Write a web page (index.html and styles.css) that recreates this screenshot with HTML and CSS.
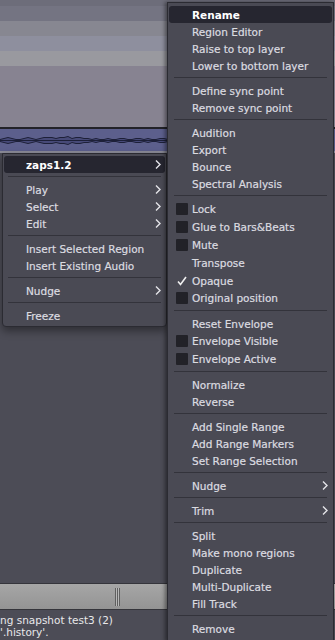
FILE: index.html
```html
<!DOCTYPE html>
<html lang="en">
<head>
  <meta charset="UTF-8">
  <title>Region menu</title>
  <link rel="stylesheet" href="styles.css">
</head>
<body>
  <div class="screen">
    <div class="band band-0"></div>
    <div class="band band-1"></div>
    <div class="band band-2"></div>
    <div class="band band-3"></div>
    <div class="band band-4"></div>
    <div class="band band-5"></div>
    <div class="track-line"></div>
    <div class="wave">
      <svg width="168" height="22" viewBox="0 0 168 22">
        <polygon class="wave-fill" points="0,10.5 4,9.5 8,8.5 12,9.5 16,10.5 20,10.5 24,9.5 28,8.5 32,9.5 36,10.5 40,9.5 44,8.5 48,8.5 52,8.5 56,9.5 60,8.5 64,8.5 68,7.5 72,9.5 76,8.5 80,8.5 84,9.5 88,9.5 92,10.5 96,9.5 100,10.5 104,10.5 108,9.5 112,10.5 116,10.5 120,9.5 124,9.5 128,10.5 132,10.5 136,9.5 140,9.5 144,10.5 148,9.5 152,10.5 156,10.5 160,9.5 164,9.5 168,10.5 168,12.5 164,13.5 160,13.5 156,12.5 152,12.5 148,13.5 144,12.5 140,13.5 136,13.5 132,12.5 128,12.5 124,13.5 120,13.5 116,12.5 112,12.5 108,13.5 104,12.5 100,12.5 96,13.5 92,12.5 88,13.5 84,13.5 80,14.5 76,14.5 72,13.5 68,15.5 64,14.5 60,14.5 56,13.5 52,14.5 48,14.5 44,14.5 40,13.5 36,12.5 32,13.5 28,14.5 24,13.5 20,12.5 16,12.5 12,13.5 8,14.5 4,13.5 0,12.5"/>
        <line class="wave-mid" x1="0" y1="11.5" x2="168" y2="11.5"/>
      </svg>
    </div>
    <div class="track-strip"></div>
    <div class="workspace"></div>
    <div class="scrollbar"><span class="grip"></span></div>
    <div class="status">
      <div>ng snapshot test3 (2)</div>
      <div>'.history'.</div>
    </div>
  </div>

  <!-- ===== Region submenu ===== -->
  <div class="menu region-menu">
    <div class="item active">zaps1.2<svg class="arrow" width="6" height="9" viewBox="0 0 6 9"><polyline points="1,0.5 5,4.5 1,8.5"/></svg></div>
    <div class="sep"></div>
    <div class="item">Play<svg class="arrow" width="6" height="9" viewBox="0 0 6 9"><polyline points="1,0.5 5,4.5 1,8.5"/></svg></div>
    <div class="item">Select<svg class="arrow" width="6" height="9" viewBox="0 0 6 9"><polyline points="1,0.5 5,4.5 1,8.5"/></svg></div>
    <div class="item">Edit<svg class="arrow" width="6" height="9" viewBox="0 0 6 9"><polyline points="1,0.5 5,4.5 1,8.5"/></svg></div>
    <div class="sep"></div>
    <div class="item">Insert Selected Region</div>
    <div class="item">Insert Existing Audio</div>
    <div class="sep"></div>
    <div class="item">Nudge<svg class="arrow" width="6" height="9" viewBox="0 0 6 9"><polyline points="1,0.5 5,4.5 1,8.5"/></svg></div>
    <div class="sep"></div>
    <div class="item">Freeze</div>
  </div>

  <!-- ===== Region context menu ===== -->
  <div class="menu context-menu">
    <div class="item active">Rename</div>
    <div class="item">Region Editor</div>
    <div class="item">Raise to top layer</div>
    <div class="item">Lower to bottom layer</div>
    <div class="sep"></div>
    <div class="item">Define sync point</div>
    <div class="item">Remove sync point</div>
    <div class="sep"></div>
    <div class="item">Audition</div>
    <div class="item">Export</div>
    <div class="item">Bounce</div>
    <div class="item">Spectral Analysis</div>
    <div class="sep"></div>
    <div class="item check"><span class="box"></span>Lock</div>
    <div class="item check"><span class="box"></span>Glue to Bars&amp;Beats</div>
    <div class="item check"><span class="box"></span>Mute</div>
    <div class="item check">Transpose</div>
    <div class="item"><svg class="tick" width="12" height="12" viewBox="0 0 12 12"><polyline points="2,6.5 4.5,9.5 10,2"/></svg>Opaque</div>
    <div class="item check"><span class="box"></span>Original position</div>
    <div class="sep"></div>
    <div class="item">Reset Envelope</div>
    <div class="item check"><span class="box"></span>Envelope Visible</div>
    <div class="item check"><span class="box"></span>Envelope Active</div>
    <div class="sep"></div>
    <div class="item">Normalize</div>
    <div class="item">Reverse</div>
    <div class="sep"></div>
    <div class="item">Add Single Range</div>
    <div class="item">Add Range Markers</div>
    <div class="item">Set Range Selection</div>
    <div class="sep"></div>
    <div class="item">Nudge<svg class="arrow" width="6" height="9" viewBox="0 0 6 9"><polyline points="1,0.5 5,4.5 1,8.5"/></svg></div>
    <div class="sep"></div>
    <div class="item">Trim<svg class="arrow" width="6" height="9" viewBox="0 0 6 9"><polyline points="1,0.5 5,4.5 1,8.5"/></svg></div>
    <div class="sep"></div>
    <div class="item">Split</div>
    <div class="item">Make mono regions</div>
    <div class="item">Duplicate</div>
    <div class="item">Multi-Duplicate</div>
    <div class="item">Fill Track</div>
    <div class="sep"></div>
    <div class="item">Remove</div>
  </div>
</body>
</html>
```

FILE: styles.css
```css
body {
  margin: 0;
  width: 335px;
  height: 640px;
  overflow: hidden;
  position: relative;
  background-color: #5e5e68;
  font-family: 'DejaVu Sans', sans-serif;
}
.screen {
  display: flex;
  flex-direction: column;
  width: 335px;
  height: 640px;
}
.band-0 { height: 6px; background-color: #6d6d7a; }
.band-1 { height: 15px; background-color: #747482; }
.band-2 { height: 15px; background-color: #878791; }
.band-3 { height: 15px; background-color: #8e8f9e; }
.band-4 { height: 15px; background-color: #99999f; }
.band-5 { height: 61px; background-color: #878391; }
.track-line {
  height: 2px;
  background-color: #222228;
}
.wave {
  height: 22px;
  background-color: #5c5f8c;
}
.wave svg {
  display: block;
}
.wave-fill {
  fill: #474a78;
  stroke: #1d2038;
  stroke-width: 1;
}
.wave-mid {
  stroke: #1d2038;
  stroke-width: 1;
}
.track-strip {
  height: 2px;
  background-color: #8a8a96;
}
.workspace {
  flex: 1;
  background-color: #4c4c56;
}
.scrollbar {
  height: 25px;
  border-top: 1px solid #35353b;
  border-bottom: 1px solid #35353b;
  background: linear-gradient(#a6a6a6, #949494);
  display: flex;
  align-items: center;
  padding-left: 115px;
}
.grip {
  width: 5px;
  height: 18px;
  background: repeating-linear-gradient(90deg, #5f5f5f 0 1px, #b8b8b8 1px 2px);
}
.status {
  height: 30px;
  box-sizing: border-box;
  padding-top: 4px;
  background-color: #4c4c56;
  color: #e8e8ea;
  font-size: 10.5px;
  line-height: 12px;
  white-space: nowrap;
}

/* Menus */
.menu {
  position: absolute;
  box-sizing: border-box;
  background-color: #4a4a54;
  border: 1px solid #2b2b32;
  padding: 3px 0 2px;
  color: #dcdce0;
  font-size: 10.5px;
  -webkit-text-stroke: 0.2px #dcdce0;
}
.region-menu {
  left: 2px;
  top: 153px;
  width: 165px;
  padding-top: 2px;
  border-radius: 0 0 4px 4px;
  box-shadow: 0 4px 8px rgba(0, 0, 0, 0.4);
}
.context-menu {
  left: 167px;
  top: 2px;
  width: 167px;
  height: 640px;
  box-shadow: -2px 0 4px rgba(0, 0, 0, 0.45);
}
.item {
  display: flex;
  align-items: center;
  height: 17px;
  margin: 0 1px;
  padding-left: 22px;
  border-radius: 3px;
  white-space: nowrap;
}
.context-menu .item {
  padding-left: 23px;
}
.item.check {
  height: 18px;
}
.item.active {
  background-color: #262630;
  color: #fff;
  font-weight: bold;
  -webkit-text-stroke: 0;
}
.arrow {
  margin-left: auto;
  margin-right: 4px;
  fill: none;
  stroke: #e4e4e8;
  stroke-width: 1.4;
}
.box {
  width: 12px;
  height: 12px;
  margin-left: -16px;
  margin-right: 4px;
  background-color: #222228;
  border-radius: 1px;
}
.tick {
  margin-left: -16px;
  margin-right: 4px;
  fill: none;
  stroke: #f0f0f0;
  stroke-width: 1.6;
}
.sep {
  height: 1px;
  margin: 3px 5px 4px;
  background-color: #33333b;
}
.context-menu .sep {
  margin: 3px 6px 4px;
}
```
